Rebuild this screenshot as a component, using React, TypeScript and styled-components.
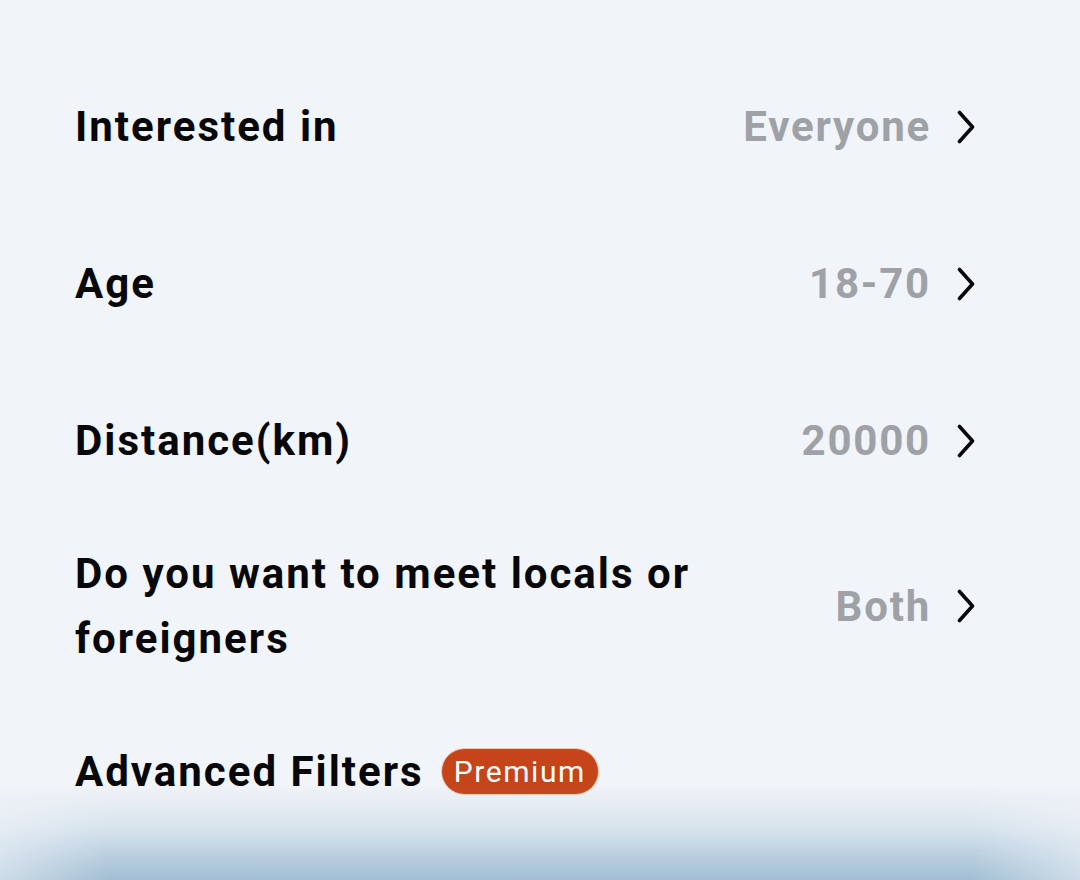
import React from "react";
import styled, { createGlobalStyle } from "styled-components";

const Global = createGlobalStyle`
  html, body { margin: 0; padding: 0; background: #f1f4f9; }
  body { font-family: Roboto, "Noto Sans", sans-serif; overflow: hidden; }
  #root { min-height: 880px; }
`;

const Page = styled.div`
  position: relative;
  width: 1080px;
  height: 880px;
  overflow: hidden;
  background: #f1f4f9;
`;

const List = styled.ul`
  list-style: none;
  margin: 0;
  padding: 48px 105px 0 75px;
  display: flex;
  flex-direction: column;
`;

const Row = styled.li`
  min-height: 157px;
  padding: 22px 0;
  box-sizing: border-box;
  display: flex;
  align-items: center;
  justify-content: space-between;
  gap: 40px;
`;

const Label = styled.div<{ $wrap?: boolean }>`
  font-size: 42px;
  font-weight: 700;
  color: #08080b;
  line-height: 65px;
  letter-spacing: 2px;
  max-width: ${(p) => (p.$wrap ? "660px" : "none")};
  display: flex;
  align-items: center;
  gap: 18px;
`;

const Value = styled.div`
  display: flex;
  align-items: center;
  gap: 26px;
  font-size: 42px;
  font-weight: 700;
  color: #9ea1a6;
  letter-spacing: 1.8px;
  white-space: nowrap;
`;

const Badge = styled.span`
  display: inline-flex;
  align-items: center;
  height: 45px;
  padding: 0 12px;
  border-radius: 23px;
  background: #c5441a;
  box-shadow: 0 0 0 1px #f4c7a8;
  color: #ffffff;
  font-size: 30px;
  font-weight: 400;
  letter-spacing: 1.6px;
  line-height: 45px;
`;

const Fade = styled.div`
  position: absolute;
  left: 0;
  right: 0;
  bottom: 0;
  height: 95px;
  background: linear-gradient(
    to bottom,
    rgba(160, 190, 211, 0) 0%,
    rgba(160, 190, 211, 0.3) 45%,
    rgba(160, 190, 211, 0.82) 85%,
    #a2bfd3 100%
  );
  -webkit-mask-image: linear-gradient(to right, rgba(0,0,0,0.45) 0%, #000 10%, #000 90%, rgba(0,0,0,0.45) 100%);
  mask-image: linear-gradient(to right, rgba(0,0,0,0.45) 0%, #000 10%, #000 90%, rgba(0,0,0,0.45) 100%);
  pointer-events: none;
`;

const Chevron = () => (
  <svg width="18" height="34" viewBox="0 0 18 34" fill="none">
    <path d="M2.5 2.5 L15.5 17 L2.5 31.5" stroke="#08080b" strokeWidth="3.6" strokeLinecap="round" strokeLinejoin="round" />
  </svg>
);

type Item = { label: string; value?: string; wrap?: boolean; premium?: boolean };

const items: Item[] = [
  { label: "Interested in", value: "Everyone" },
  { label: "Age", value: "18-70" },
  { label: "Distance(km)", value: "20000" },
  { label: "Do you want to meet locals or foreigners", value: "Both", wrap: true },
  { label: "Advanced Filters", premium: true },
];

export default function App() {
  return (
    <Page>
      <Global />
      <List>
        {items.map((it) => (
          <Row key={it.label}>
            <Label $wrap={it.wrap}>
              {it.label}
              {it.premium && <Badge>Premium</Badge>}
            </Label>
            {it.value && (
              <Value>
                {it.value}
                <Chevron />
              </Value>
            )}
          </Row>
        ))}
      </List>
      <Fade />
    </Page>
  );
}
